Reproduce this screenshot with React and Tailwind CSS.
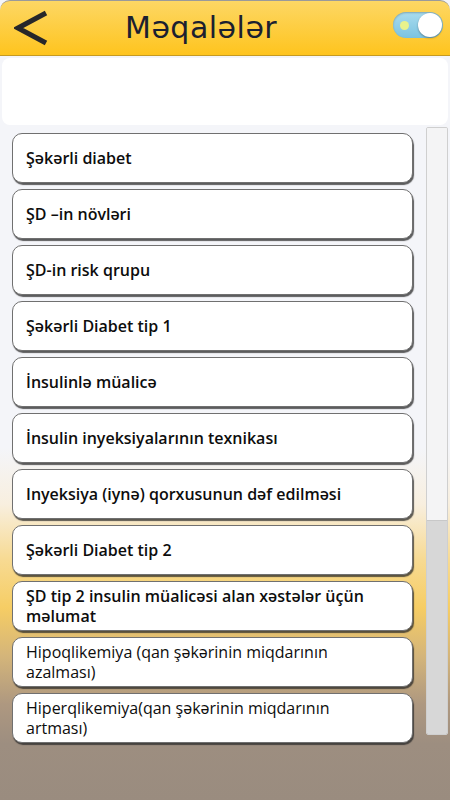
import { useState } from "react";

const articles = [
  { title: "Şəkərli diabet", w: "font-semibold" },
  { title: "ŞD –in növləri", w: "font-semibold" },
  { title: "ŞD-in risk qrupu", w: "font-semibold" },
  { title: "Şəkərli Diabet tip 1", w: "font-semibold" },
  { title: "İnsulinlə müalicə", w: "font-semibold" },
  { title: "İnsulin inyeksiyalarının texnikası", w: "font-semibold" },
  { title: "Inyeksiya (iynə) qorxusunun dəf edilməsi", w: "font-semibold" },
  { title: "Şəkərli Diabet tip 2", w: "font-semibold" },
  { title: "ŞD tip 2 insulin müalicəsi alan xəstələr üçün məlumat", w: "font-semibold" },
  { title: "Hipoqlikemiya (qan şəkərinin miqdarının azalması)", w: "font-medium" },
  { title: "Hiperqlikemiya(qan şəkərinin miqdarının artması)", w: "font-medium" },
];

function Toggle({ on, onClick }) {
  return (
    <button
      onClick={onClick}
      className="relative w-[50px] h-[26px] rounded-full bg-[linear-gradient(180deg,#a9dcef,#7cc3e0)] shadow-[inset_0_1px_2px_rgba(0,0,0,0.25)]"
    >
      <span className="absolute left-[7px] top-[9px] w-[9px] h-[9px] rounded-full bg-[#e8f28c]" />
      <span
        className={
          on
            ? "absolute right-[1px] top-[1px] w-[24px] h-[24px] rounded-full bg-white shadow-[0_1px_2px_rgba(0,0,0,0.35)]"
            : "absolute left-[1px] top-[1px] w-[24px] h-[24px] rounded-full bg-white shadow-[0_1px_2px_rgba(0,0,0,0.35)]"
        }
      />
    </button>
  );
}

function App() {
  const [on, setOn] = useState(true);

  return (
    <div
      className="w-[450px] h-[800px] overflow-hidden flex flex-col bg-[linear-gradient(180deg,#f4f5f9_0%,#f4f5f9_56%,#f8efdf_63%,#f7da92_70%,#f6cd64_76%,#d4b57a_82%,#ae9880_88%,#9d8e80_93%,#9a8c7f_100%)]"
      style={{ fontFamily: "'Open Sans', 'Noto Sans', sans-serif" }}
    >
      {/* header */}
      <div className="h-[56px] shrink-0 flex items-center rounded-t-[10px] border-t border-[#9a9a9a] border-b border-b-[#c59a22] bg-[linear-gradient(180deg,#fdd764,#fec41e)]">
        <svg width="36" height="36" viewBox="0 0 36 36" className="ml-[14px]">
          <polyline points="32,3 4,18 32,33" fill="none" stroke="#27272a" strokeWidth="5" strokeLinejoin="miter" />
        </svg>
        <h1
          className="ml-[75px] text-[30px] leading-none text-[#1b2030] tracking-[0.5px]"
          style={{ fontFamily: "'DejaVu Sans', Verdana, sans-serif" }}
        >
          Məqalələr
        </h1>
        <div className="ml-auto mr-[7px]">
          <Toggle on={on} onClick={() => setOn(!on)} />
        </div>
      </div>

      {/* ad space */}
      <div className="mx-[2px] mt-[2px] h-[67px] shrink-0 rounded-[8px] bg-white" />

      {/* list */}
      <div className="flex mt-[2px]">
        <div className="flex flex-col gap-[6px] pl-[12px] pt-[6px] w-[414px]">
          {articles.map((a) => (
            <button
              key={a.title}
              className="h-[50px] w-[401px] rounded-[10px] bg-white border border-[#707070] shadow-[1px_2px_1px_rgba(40,40,40,0.75)] text-left pl-[13px] pr-[18px] flex items-center"
            >
              <span className={`max-w-[368px] text-[16px] leading-[20px] text-[#0d0d0d] ${a.w}`}>{a.title}</span>
            </button>
          ))}
        </div>
        <div className="ml-[12px] w-[22px] h-[608px] flex flex-col rounded-[2px] border border-[#cfcfcf] overflow-hidden">
          <div className="h-[393px] bg-[#f4f4f5] border-b border-[#c8c8c8]" />
          <div className="flex-1 bg-[#d7d7d7]" />
        </div>
      </div>
    </div>
  );
}

export default App;
